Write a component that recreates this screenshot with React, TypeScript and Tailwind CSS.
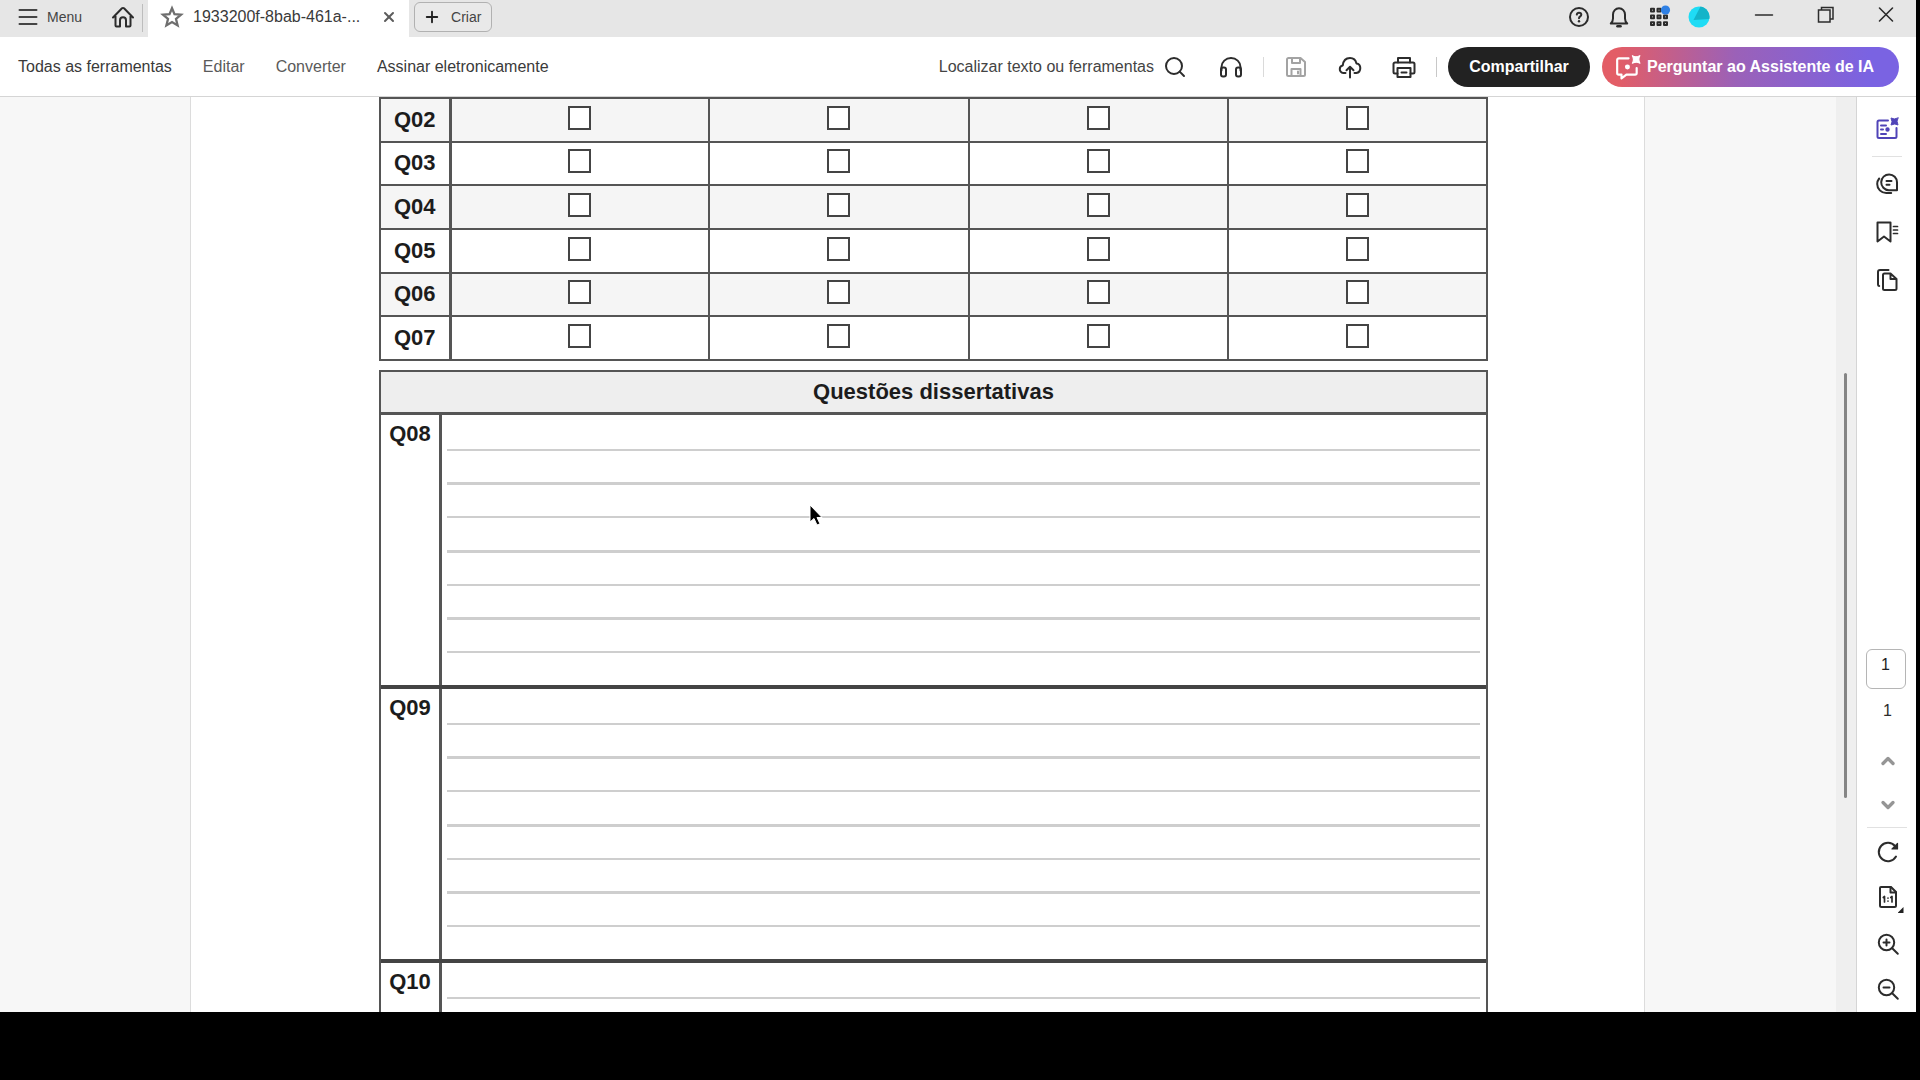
import React from 'react';
import { ChevronDown, ChevronUp, Plus, Search, X } from 'lucide-react';

const objectiveRows = ['Q02', 'Q03', 'Q04', 'Q05', 'Q06', 'Q07'];
const options = ['A', 'B', 'C', 'D'];
const essayRows = ['Q08', 'Q09', 'Q10'];
const toolMenu = [
  { label: 'Todas as ferramentas', color: 'text-[#3a3a3a]' },
  { label: 'Editar', color: 'text-[#5a5a5a]' },
  { label: 'Converter', color: 'text-[#5a5a5a]' },
  { label: 'Assinar eletronicamente', color: 'text-[#3a3a3a]' }
];

type IconProps = {
  children: React.ReactNode;
  className?: string;
  strokeWidth?: number;
};

const Icon: React.FC<IconProps> = ({ children, className = 'h-6 w-6', strokeWidth = 2 }) => (
  <svg
    viewBox="0 0 24 24"
    className={className}
    fill="none"
    stroke="currentColor"
    strokeWidth={strokeWidth}
    strokeLinecap="round"
    strokeLinejoin="round"
    aria-hidden="true"
  >
    {children}
  </svg>
);

const TitleBar: React.FC = () => {
  return (
    <header className="flex h-[37px] shrink-0 items-start bg-[#e6e6e6] text-[#2c2c2c]">
      <button className="flex items-center gap-[7px] pl-4 pt-[5px] text-sm leading-5 text-[#444]">
        <Icon>
          <path d="M3.500 5h17M3.500 12h17M3.500 19h17" />
        </Icon>
        <span>Menu</span>
      </button>
      <button aria-label="Início" className="ml-[29px] pt-[5px]">
        <Icon>
          <path d="M4.500 11v9.500a1 1 0 0 0 1 1H9v-6.300a3 3 0 0 1 6 0v6.300h3.500a1 1 0 0 0 1-1V11M2 12.500 11 3.300a1.400 1.400 0 0 1 2 0l9 9.200" />
        </Icon>
      </button>
      <div className="ml-[7px] mt-1 h-7 w-px bg-[#bdbdbd]" />

      <div className="ml-[5px] flex h-full w-[261px] items-start bg-white pl-3 pt-[5px]">
        <button aria-label="Favoritar" className="text-[#6e6e6e]">
          <Icon strokeWidth={2.3}>
            <path d="m12 3.200 2.500 6 6.500.5-5 4.200 1.600 6.500L12 17l-5.600 3.400L8 13.900 3 9.700l6.500-.5z" strokeLinejoin="miter" />
          </Icon>
        </button>
        <a href="#doc" className="ml-[9px] text-base leading-6 text-[#3a3a3a]">1933200f-8bab-461a-...</a>
        <button aria-label="Fechar guia" className="ml-auto mr-3 mt-1 text-[#5c5c5c]">
          <X className="h-4 w-4" strokeWidth={3} />
        </button>
      </div>

      <button className="ml-[5px] mt-[2px] flex h-[30px] w-[78px] items-center gap-[10px] rounded-md border border-[#b1b1b1] bg-[#e9e9e9] pl-2 text-sm leading-5 text-[#444]">
        <Plus className="h-[18px] w-[18px] text-[#222]" strokeWidth={2.5} />
        <span>Criar</span>
      </button>

      <div className="ml-auto flex items-start pr-[18px] pt-[5px]">
        <button aria-label="Ajuda">
          <Icon>
            <circle cx="12" cy="12" r="9" />
            <path d="M9.800 9.600c.2-1.300 1.100-1.900 2.200-1.900 1.300 0 2.300.8 2.300 2 0 1.700-2.300 1.700-2.300 3.600" />
            <path d="M12 16.200v.1" strokeWidth="2.400" />
          </Icon>
        </button>
        <button aria-label="Notificações" className="ml-4">
          <Icon>
            <path d="M3.800 18.500h16.400c-1.600-1.600-2.200-2.800-2.200-5V9.500c0-3.300-2.600-6.200-6-6.200S6 6.200 6 9.500v4c0 2.200-.6 3.400-2.200 5z" />
            <path d="M10.500 21.300h3" strokeWidth="2.600" />
          </Icon>
        </button>
        <button aria-label="Aplicativos" className="ml-4">
          <Icon>
            <path d="M4 3.800h3v2.800H4zM10.500 3.800h3v2.800h-3zM4 10.500h3v2.800H4zM10.500 10.500h3v2.800h-3zM17 10.500h3v2.800h-3zM4 17.200h3V20H4zM10.500 17.200h3V20h-3zM17 17.200h3V20h-3z" />
            <circle cx="18.500" cy="5" r="4.600" fill="#2f80e4" stroke="none" />
          </Icon>
        </button>
        <button aria-label="Conta" className="ml-4">
          <svg viewBox="0 0 24 24" className="h-6 w-6" aria-hidden="true">
            <circle cx="12" cy="12" r="10.500" fill="#1fdcf5" />
            <path d="M13.500 1.600A10.500 10.500 0 0 1 22.300 14L6.500 15z" fill="#13b4c9" />
          </svg>
        </button>
        <div className="-mt-[3px] flex">
          <button aria-label="Minimizar" className="ml-[41px]">
            <Icon strokeWidth={1.5}>
              <path d="M3.500 13h17" />
            </Icon>
          </button>
          <button aria-label="Restaurar" className="ml-[38px]">
            <Icon strokeWidth={1.5}>
              <path d="M4.500 8H16v12H4.500zM7.500 8V5.500H19V17h-3" strokeLinejoin="miter" />
            </Icon>
          </button>
          <button aria-label="Fechar" className="ml-9">
            <Icon strokeWidth={1.6}>
              <path d="m5.500 6 13 13M18.500 6l-13 13" />
            </Icon>
          </button>
        </div>
      </div>
    </header>
  );
};

const Toolbar: React.FC = () => {
  return (
    <div className="flex h-[60px] shrink-0 items-center border-b border-[#d5d5d5] bg-white pl-[18px] pr-[17px] text-base leading-6 text-[#2c2c2c]">
      <nav className="flex gap-[31px]">
        {toolMenu.map((item) => (
          <a key={item.label} href="#tools" className={item.color}>
            {item.label}
          </a>
        ))}
      </nav>

      <div className="ml-auto flex items-center">
        <button className="flex items-center gap-[9px] text-[#444]">
          <span>Localizar texto ou ferramentas</span>
          <Search className="h-6 w-6 text-[#2c2c2c]" />
        </button>
        <button aria-label="Ouvir" className="ml-8">
          <Icon>
            <path d="M2.500 15.500V12a9.500 9 0 0 1 19 0v3.500" />
            <rect x="2" y="12.500" width="5" height="9" rx="2" />
            <rect x="17" y="12.500" width="5" height="9" rx="2" />
          </Icon>
        </button>
        <div className="ml-5 h-5 w-px bg-[#dadada]" />
        <button aria-label="Salvar" className="ml-5 text-[#a3a3a3]">
          <Icon>
            <path d="M4.500 3h12L21 7v12.500a1.500 1.500 0 0 1-1.500 1.500h-15A1.500 1.500 0 0 1 3 19.500v-15A1.500 1.500 0 0 1 4.500 3zM8 3v5h8V3M7.500 21v-7h9v7M14 16.500v2" />
          </Icon>
        </button>
        <button aria-label="Enviar para a nuvem" className="ml-[30px]">
          <Icon>
            <path d="M7.500 18H5.200A3.700 3.700 0 0 1 1.800 14c0-1.800 1.200-3.300 3-3.600C5.300 5.600 8 3 12 3s5.800 2.300 6.400 5.400c2.300.3 3.900 2.200 3.900 4.600 0 2.600-1.700 4.700-4 5h-1.800" />
            <path d="M12 22.500V12M8.500 15.200 12 11.700l3.500 3.500" />
          </Icon>
        </button>
        <button aria-label="Imprimir" className="ml-[30px]">
          <Icon>
            <path d="M6 7.500V3h12v4.500" />
            <path d="M5.500 18.500H3A1.500 1.500 0 0 1 1.500 17V9A1.500 1.500 0 0 1 3 7.500h18A1.500 1.500 0 0 1 22.500 9v8a1.500 1.500 0 0 1-1.500 1.500h-2.500" />
            <path d="M5.500 13h13v9h-13zM9.500 17.500h5" />
          </Icon>
        </button>
        <div className="ml-5 h-5 w-px bg-[#c8c8c8]" />
        <button className="ml-[11px] h-10 w-[142px] rounded-full bg-[#222] font-bold text-white">Compartilhar</button>
        <button className="ml-3 flex h-10 w-[297px] items-center gap-[6px] rounded-full bg-[linear-gradient(90deg,#e35d66_5%,#9b61b8_45%,#7a63e2_90%)] pl-[13px] font-bold text-white">
          <Icon className="h-[26px] w-[26px] shrink-0">
            <path d="M12.500 4H3.500A1.500 1.500 0 0 0 2 5.500v12A1.500 1.500 0 0 0 3.500 19H6v3.500l4.500-3.500h8a1.500 1.500 0 0 0 1.500-1.500V13" />
            <path d="M23 1.500q-2 3 0 7-3-2-7 0 2-3 0-7 3 2 7 0z" fill="currentColor" strokeWidth="1" />
            <circle cx="11.500" cy="12" r="1.300" fill="currentColor" />
          </Icon>
          <span className="whitespace-nowrap">Perguntar ao Assistente de IA</span>
        </button>
      </div>
    </div>
  );
};

const ObjectiveTable: React.FC = () => {
  return (
    <table className="h-[264px] w-full table-fixed border-collapse border-2 border-[#555] text-[22px] leading-6">
      <tbody>
        {objectiveRows.map((question) => (
          <tr key={question} className="odd:bg-[#f5f5f5]">
            <th scope="row" className="w-[70px] border-2 border-r-[3px] border-[#555] p-0 font-bold">{question}</th>
            {options.map((option) => (
              <td key={option} className="border-2 border-[#555] p-0 pb-1 text-center">
                <input
                  type="checkbox"
                  aria-label={`${question} ${option}`}
                  className="mx-auto block h-6 w-[23px] appearance-none border-2 border-[#444] bg-white"
                />
              </td>
            ))}
          </tr>
        ))}
      </tbody>
    </table>
  );
};

const EssaySection: React.FC = () => {
  return (
    <section className="mt-[9px] border-2 border-[#555] text-[22px] leading-6">
      <h2 className="flex h-[43px] items-center justify-center border-b-[3px] border-[#555] bg-[#eee] font-bold">
        Questões dissertativas
      </h2>
      {essayRows.map((question) => (
        <div key={question} className="flex h-[274px] border-b-4 border-[#444]">
          <h3 className="w-[61px] shrink-0 border-r-[3px] border-[#555] pt-[7px] text-center font-bold">{question}</h3>
          <div className="flex-1 pl-[5px] pr-[6px] pt-[3px]">
            <div className="flex h-[235px] flex-col">
              {[...Array(7)].map((_, i) => (
                <div key={i} className="flex-1 border-b-[3px] border-[#cecece] odd:border-b-2" />
              ))}
            </div>
          </div>
        </div>
      ))}
    </section>
  );
};

const SideRail: React.FC = () => {
  return (
    <aside className="flex w-[60px] shrink-0 flex-col items-center border-l border-[#d5d5d5] bg-white pb-[11px] pt-5 text-[#2c2c2c]">
      <button aria-label="Assistente de IA" className="text-[#5044b8]">
        <Icon>
          <path d="M13 3.500H4A1.500 1.500 0 0 0 2.500 5v14.500A1.500 1.500 0 0 0 4 21h16a1.500 1.500 0 0 0 1.500-1.500V11" />
          <path d="M6 8.500h5M6 12.500h2M6 17h5" />
          <path d="M23 1q-2 3 0 7-3-2-7 0 2-3 0-7 3 2 7 0z" fill="currentColor" strokeWidth="1" />
          <circle cx="12.500" cy="12.500" r="1.200" fill="currentColor" />
        </Icon>
      </button>
      <div className="mb-[15px] mt-[15px] h-px w-[30px] bg-[#e1e1e1]" />
      <button aria-label="Comentários">
        <Icon>
          <path d="M22 18.200h-8.200a7.900 7.900 0 1 1 8.200-7.900z" />
          <path d="M4.200 6.500A9 9 0 0 0 2.200 12c0 5 4 9 9 9h5" />
          <path d="M11.500 9h5M11.500 12.700h3" />
        </Icon>
      </button>
      <button aria-label="Marcadores" className="mt-6">
        <Icon>
          <path d="M2.500 2.500h13v19L9 16.500l-6.500 5z" />
          <path d="M18.500 6.500h4M18.500 10h4M18.500 13.500h4" strokeWidth="1.700" />
        </Icon>
      </button>
      <button aria-label="Páginas" className="mt-6">
        <Icon>
          <path d="M9.500 5.500h6l6 5.500v9.500a1.500 1.500 0 0 1-1.500 1.500H9.500A1.500 1.500 0 0 1 8 20.500V7a1.500 1.500 0 0 1 1.500-1.500zM15.500 5.500V11h6" />
          <path d="M13.500 2H5a2 2 0 0 0-2 2v12.500a1.500 1.500 0 0 0 1.200 1.500" />
        </Icon>
      </button>

      <input
        aria-label="Página atual"
        defaultValue="1"
        className="mr-[2px] mt-auto h-10 w-10 rounded-md border border-[#b5b5b5] bg-white pb-2 text-center text-base leading-6 text-[#222]"
      />
      <span className="mt-[10px] pl-[2px] text-base leading-6">1</span>
      <button aria-label="Página anterior" className="mt-7 pl-[2px] text-[#959595]">
        <ChevronUp className="h-5 w-5" strokeWidth={4} />
      </button>
      <button aria-label="Próxima página" className="mt-6 pl-[2px] text-[#959595]">
        <ChevronDown className="h-5 w-5" strokeWidth={4} />
      </button>
      <div className="mb-3 mt-3 h-px w-10 bg-[#e1e1e1]" />
      <button aria-label="Girar" className="pl-[2px]">
        <Icon>
          <path d="M20 16.500A9.200 9.200 0 1 1 19 6" />
          <path d="M21.500 3.500V9H16z" fill="currentColor" strokeWidth="1.200" />
        </Icon>
      </button>
      <button aria-label="Tamanho real" className="relative mt-[21px] pl-[2px]">
        <Icon>
          <path d="M5 2h10l5 5v13.500a1.500 1.500 0 0 1-1.500 1.500h-13A1.500 1.500 0 0 1 4 20.500V3a1 1 0 0 1 1-1z" />
          <path d="M14.500 2v5.500H20" />
          <path d="m7.300 12.500 1.200-1v5.500M14.800 12.500l1.200-1v5.500M12 13v.1M12 16v.1" strokeWidth="1.700" />
        </Icon>
        <span className="absolute -bottom-1 -right-1 h-[6px] w-[6px] bg-[#222] [clip-path:polygon(100%_0,100%_100%,0_100%)]" />
      </button>
      <button aria-label="Aumentar zoom" className="mt-[23px] pl-[2px]">
        <Icon>
          <circle cx="10.500" cy="10.500" r="7.700" />
          <path d="m16.200 16.200 5.600 5.600M7.500 10.500h6M10.500 7.500v6" />
        </Icon>
      </button>
      <button aria-label="Diminuir zoom" className="mt-[21px] pl-[2px]">
        <Icon>
          <circle cx="10.500" cy="10.500" r="7.700" />
          <path d="m16.200 16.200 5.600 5.600M7.500 10.500h6" />
        </Icon>
      </button>
    </aside>
  );
};

const App: React.FC = () => {
  return (
    <div className="flex h-screen flex-col bg-black pb-[68px] pr-1 font-['Liberation_Sans',Arial,sans-serif]">
      <TitleBar />
      <Toolbar />
      <div className="flex min-h-0 flex-1">
        <main className="relative min-w-0 flex-1 overflow-hidden bg-[#f7f7f7]">
          <article className="ml-[190px] mr-[191px] min-h-full border-x border-[#dcdcdc] bg-white pl-[188px] pr-[156px] text-[#1c1c1c]">
            <ObjectiveTable />
            <EssaySection />
          </article>
          {/* mouse pointer */}
          <svg viewBox="0 0 14 24" className="absolute left-[809px] top-[407px] h-6 w-[14px]" aria-hidden="true">
            <path d="M1 1v17l4-3.500 3 6.500 3-1.200-3-6.300h5z" fill="#000" stroke="#fff" strokeWidth="1" />
          </svg>
        </main>
        <div className="w-5 shrink-0 bg-[#efefef] pl-2 pt-[276px]">
          <div className="h-[425px] w-[3px] rounded-full bg-[#858585]" />
        </div>
        <SideRail />
      </div>
    </div>
  );
};

export default App;
